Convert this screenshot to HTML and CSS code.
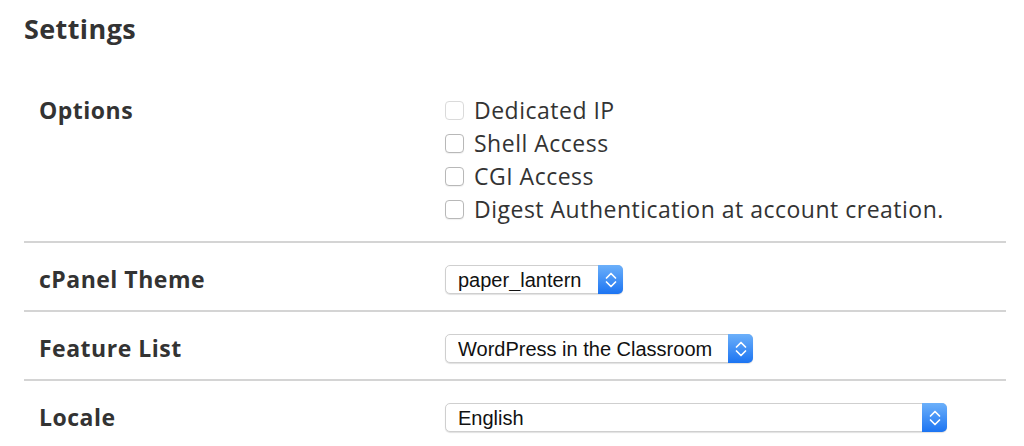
FILE: index.html
```html
<!DOCTYPE html>
<html lang="en">
<head>
    <meta charset="UTF-8">
    <meta name="viewport" content="width=device-width, initial-scale=1.0">
    <title>Settings</title>
    <link rel="stylesheet" href="styles.css">
</head>
<body>
    <div class="page">
        <h1>Settings</h1>
        <div class="settings-table">
            <div class="row row-options">
                <div class="label">Options</div>
                <div class="value">
                    <label class="check"><input type="checkbox" disabled> Dedicated IP</label>
                    <label class="check"><input type="checkbox"> Shell Access</label>
                    <label class="check"><input type="checkbox"> CGI Access</label>
                    <label class="check"><input type="checkbox"> Digest Authentication at account creation.</label>
                </div>
            </div>
            <div class="row">
                <div class="label">cPanel Theme</div>
                <div class="value">
                    <div class="select-wrap select-theme">
                        <select>
                            <option>paper_lantern</option>
                        </select>
                        <span class="select-arrow">
                            <svg width="12" height="18" viewBox="0 0 12 18"><path d="M1.5 7 L6 2.5 L10.5 7 M1.5 11 L6 15.5 L10.5 11" fill="none" stroke="#fff" stroke-width="1.7" stroke-linecap="round" stroke-linejoin="round"/></svg>
                        </span>
                    </div>
                </div>
            </div>
            <div class="row">
                <div class="label">Feature List</div>
                <div class="value">
                    <div class="select-wrap select-features">
                        <select>
                            <option>WordPress in the Classroom</option>
                        </select>
                        <span class="select-arrow">
                            <svg width="12" height="18" viewBox="0 0 12 18"><path d="M1.5 7 L6 2.5 L10.5 7 M1.5 11 L6 15.5 L10.5 11" fill="none" stroke="#fff" stroke-width="1.7" stroke-linecap="round" stroke-linejoin="round"/></svg>
                        </span>
                    </div>
                </div>
            </div>
            <div class="row">
                <div class="label">Locale</div>
                <div class="value">
                    <div class="select-wrap select-locale">
                        <select>
                            <option>English</option>
                        </select>
                        <span class="select-arrow">
                            <svg width="12" height="18" viewBox="0 0 12 18"><path d="M1.5 7 L6 2.5 L10.5 7 M1.5 11 L6 15.5 L10.5 11" fill="none" stroke="#fff" stroke-width="1.7" stroke-linecap="round" stroke-linejoin="round"/></svg>
                        </span>
                    </div>
                </div>
            </div>
        </div>
    </div>
</body>
</html>
```

FILE: styles.css
```css
body {
    margin: 0;
    background: #fff;
    font-family: "Open Sans", sans-serif;
    color: #333;
}
.page {
    padding: 11px 18px 0 24px;
}
h1 {
    margin: 0;
    font-size: 27px;
    line-height: 36px;
    font-weight: 700;
    letter-spacing: 0.4px;
    color: #333;
}
.settings-table {
    margin-top: 33px;
}
.row {
    display: grid;
    grid-template-columns: 421px 1fr;
    align-items: center;
    padding: 22px 0 16px;
    border-top: 2px solid #d4d4d4;
}
.row-options {
    align-items: start;
    padding: 14px 0 15px;
    border-top: none;
}
.label {
    padding-left: 15px;
    font-size: 23px;
    font-weight: 700;
    letter-spacing: 0.5px;
    line-height: 29px;
}
.row-options .label {
    line-height: 33px;
}
.check {
    display: flex;
    align-items: center;
    gap: 10px;
    font-size: 23px;
    letter-spacing: 0.5px;
    line-height: 33px;
}
.check input {
    appearance: none;
    -webkit-appearance: none;
    width: 19px;
    height: 19px;
    margin: 0;
    border: 1px solid #b8b8b8;
    border-radius: 4px;
    background: #fff;
    box-shadow: 0 1px 1px rgba(0, 0, 0, 0.06);
}
.check input:disabled {
    border-color: #dadada;
    box-shadow: none;
}
.select-wrap {
    position: relative;
    height: 29px;
}
.select-wrap select {
    appearance: none;
    -webkit-appearance: none;
    width: 100%;
    height: 29px;
    margin: 0;
    padding: 0 30px 0 12px;
    border: 1px solid #cfcfcf;
    border-radius: 5px;
    background: #fff;
    box-shadow: 0 1px 1px rgba(0, 0, 0, 0.12);
    font-family: "Liberation Sans", Arial, sans-serif;
    font-size: 20px;
    color: #111;
}
.select-arrow {
    position: absolute;
    top: 0;
    right: 0;
    width: 25px;
    height: 29px;
    display: flex;
    align-items: center;
    justify-content: center;
    border-radius: 0 5px 5px 0;
    background: linear-gradient(#6cb0fa, #1c74f2);
}
.select-theme {
    width: 178px;
}
.select-features {
    width: 308px;
}
.select-locale {
    width: 502px;
}
```
